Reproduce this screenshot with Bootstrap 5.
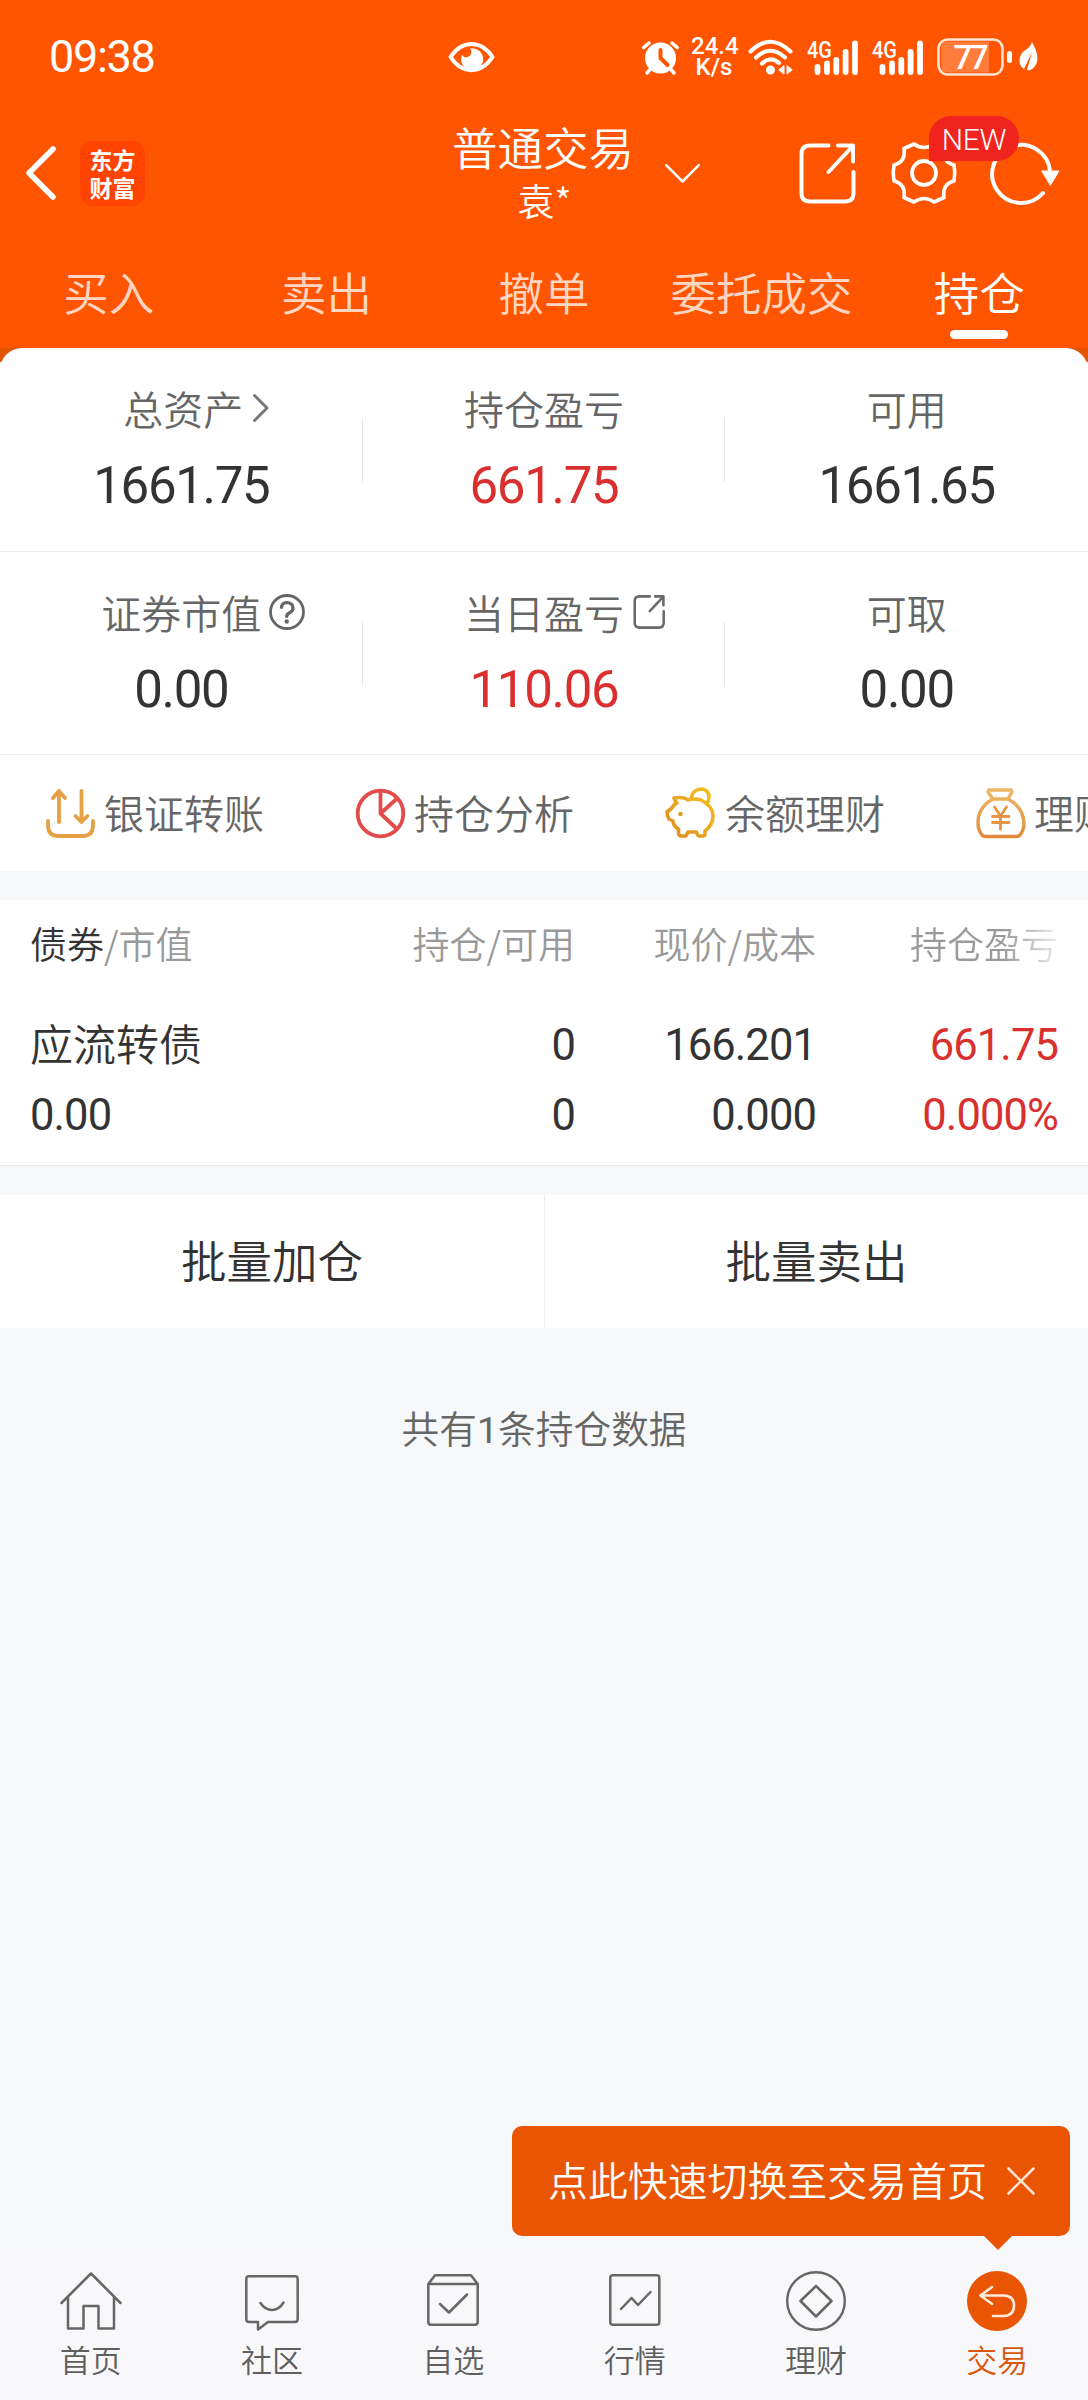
<!DOCTYPE html>
<html lang="zh-CN">
<head>
<meta charset="utf-8">
<meta name="viewport" content="width=device-width, initial-scale=1">
<title>持仓</title>
<link rel="stylesheet" href="https://cdn.jsdelivr.net/npm/bootstrap@5.3.0/dist/css/bootstrap.min.css">
<style>
:root{--brand:#ff5500;--deep:#ea5504;--ink:#333;--soft:#666;--pale:#999;--up:#d9302f;--canvas:#f7f8fa}
body{font-family:"Noto Sans CJK SC",sans-serif;background:var(--canvas);color:var(--ink);font-weight:350;overflow:hidden}
svg{display:block;flex:none;fill:none;stroke-linecap:round;stroke-linejoin:round;overflow:visible}
.screen{width:1088px;height:2400px}
.digits{font-family:Roboto,sans-serif;font-weight:400}
.topbar{background:var(--brand);color:#fff;height:348px}
.status{height:114px;padding:0 50px 0 49px}
.clock{font-size:45px;letter-spacing:-1.3px;line-height:114px;width:400px}
.rate{font-size:24px;line-height:21px;font-weight:500;width:46px;margin:0 11px 0 12px}
.titlebar{height:118px}
.applogo{width:65px;height:65px;border-radius:13px;background:#ff4300;font-weight:700;font-size:23px;line-height:28px;letter-spacing:0;margin-left:24px}
.title-main{font-size:45.5px;line-height:54px;margin-top:-1px}
.title-sub{font-size:37px;line-height:54px;padding-left:3px}
.title-col{width:182px;margin-left:307px;padding-top:0}
.newtag{left:929px;top:116px;width:90px;height:45px;border-radius:22px 22px 22px 0;background:#f0231f;font-size:30px;font-weight:300!important;line-height:47px;letter-spacing:-.3px}
.tabs-row{height:116px}
.tabs-row>div{font-size:45.5px;line-height:119px;color:#ffd6c2}
.tabs-row>.on{color:#fff}
.tabs-row>.on::after{content:"";position:absolute;left:80px;top:98px;width:58px;height:9px;border-radius:4.5px;background:#fff}
.sheet-back{background:linear-gradient(#e25400 14px,#fff 14px)}
.sheet{background:#fff;border-radius:22px 22px 0 0}
.stat-row{height:204px;border-bottom:1px solid #ededed}
.stat-row+.stat-row{height:203px}
.stat{padding-top:30px}
.stat+.stat::before{content:"";position:absolute;left:-1px;top:70px;width:1px;height:64px;background:#e8e8e8}
.cap-label{font-size:40px;line-height:60px;color:var(--soft)}
.cap-label svg{position:absolute;left:100%;top:50%}
.figure-num{font-size:51px;letter-spacing:-1.3px;line-height:60px;margin-top:18px}
.up{color:var(--up)}
.quick{height:116px;padding-left:46px}
.quick>div{width:310px;flex:none}
.quick span{font-size:40px;color:var(--soft);line-height:60px;white-space:nowrap;margin:-2px 0 0 9px}
.band{height:29px}
.grid-head{height:90px;font-size:37px;line-height:87px;color:var(--pale)}
.holding{height:176px;border-bottom:1px solid #e6e7e9;padding:0 30px}
.grid-head{padding:0 30px}
.c1{width:273px}.c2{width:272px}.c3{width:241px}.c4{width:242px}
.holding .r1{height:104px;line-height:111px;font-size:43.5px;letter-spacing:-.9px}
.holding .r1>.c1{font-size:43px;line-height:104px;letter-spacing:0}
.holding .r2{height:37px;line-height:43px;font-size:43.5px;letter-spacing:-.9px}
.fade-head{background:linear-gradient(90deg,#999 92px,#fff 162px);background-clip:text;-webkit-background-clip:text;color:transparent}
.batch{height:133px;font-size:45.5px;line-height:128px}
.batch>div+div{border-left:1px solid #f0f0f0}
.summary{font-size:37.7px;line-height:60px;color:var(--soft);margin-top:69px}
.hint{left:512px;top:2126px;width:558px;height:110px;border-radius:10px;background:var(--deep);color:#fff;font-size:39.9px;padding-left:36px}
.hint span{margin-top:-5px}
.hint::after{content:"";position:absolute;left:472px;top:110px;border:14px solid transparent;border-top-color:var(--deep);border-bottom:0}
.dock{height:150px;background:#f8f8fb;color:#5f5f5f}
.dock>div{font-size:31px;line-height:44px}
.dock .glyph{height:87px;padding-top:3px}
</style>
</head>
<body>
<div class="screen position-relative d-flex flex-column">
  <header class="topbar">
    <div class="status d-flex align-items-center">
      <div class="clock digits">09:38</div>
      <svg width="47" height="32" viewBox="0 0 47 32"><path d="M2.500 16C14-1.500 33-1.500 44.500 16C33 33.500 14 33.500 2.500 16Z" stroke="#fff" stroke-width="4"/><path d="M22 7.500A11 11 0 1 1 14 14a5 5 0 0 0 9-1Q24 9 22 7.500Z" fill="#fff"/></svg>
      <svg style="margin-left:147px" width="37" height="35" viewBox="0 0 37 35"><circle cx="18.500" cy="18" r="15.500" fill="#fff"/><path d="M1.800 7.500L7 3M35.200 7.500L30 3M5 33l3-3.500M32 33l-3-3.500" stroke="#fff" stroke-width="3.500"/><path d="M18.500 10v8l7 7" stroke="#ff5500" stroke-width="4"/></svg>
      <div class="rate digits text-center">24.4<br>K/s</div>
      <svg width="46" height="36" viewBox="0 0 46 36"><path d="M2.500 12.500Q22 -7 42.500 12.500M8 18.500Q22 5 37 18.500M14 24.500Q22 16.500 31 24" stroke="#fff" stroke-width="4"/><circle cx="22.500" cy="31" r="4.500" fill="#fff"/><path d="M36 27v8l-5-4zM39 27v8l5-4z" fill="#fff" stroke="#fff" stroke-width="1"/></svg>
      <svg style="margin-left:13px" width="51" height="35" viewBox="0 0 51 35"><text x="0" y="17.500" fill="#fff" font-family="Roboto" font-weight="500" font-size="24" textLength="25" lengthAdjust="spacingAndGlyphs">4G</text><path d="M10.500 27v5M20 23.500V32M29.300 20v12M38.600 12v20M48 3.500V32" stroke="#fff" stroke-width="5.800"/></svg>
      <svg style="margin-left:14px" width="51" height="35" viewBox="0 0 51 35"><text x="0" y="17.500" fill="#fff" font-family="Roboto" font-weight="500" font-size="24" textLength="25" lengthAdjust="spacingAndGlyphs">4G</text><path d="M10.500 27v5M20 23.500V32M29.300 20v12M38.600 12v20M48 3.500V32" stroke="#fff" stroke-width="5.800"/></svg>
      <svg style="margin-left:14px" width="76" height="38" viewBox="0 0 76 38"><path d="M10 3.500H52V34.500H10Q4 34.500 4 28V10Q4 3.500 10 3.500Z" fill="#ff7c3b"/><rect x="1.500" y="1.500" width="64" height="35" rx="9" stroke="#ffe3d3" stroke-width="2.600"/><rect x="70" y="13" width="5" height="12" rx="2.500" fill="#fff"/><text x="16.500" y="31" fill="#fff" font-family="Roboto" font-weight="500" font-size="33" textLength="35">77</text></svg>
      <svg style="margin-left:6px" width="19" height="30" viewBox="0 0 19 30"><path d="M13 0Q22 16 16 24Q13 29 8 28L13 10L5 27Q-1 23 .800 16Q2 10 8 7Q12 4 13 0Z" fill="#fff"/></svg>
    </div>
    <div class="titlebar d-flex align-items-center">
      <svg style="margin-left:26px" width="30" height="54" viewBox="0 0 30 54"><path d="M27 3L3 27L27 51" stroke="#fff" stroke-width="5.500"/></svg>
      <div class="applogo text-center d-flex flex-column justify-content-center"><div>东方</div><div>财富</div></div>
      <div class="title-col text-center"><div class="title-main text-nowrap">普通交易</div><div class="title-sub">袁*</div></div>
      <svg style="margin-left:31px" width="35" height="19" viewBox="0 0 35 19"><path d="M1.200 1.200L17.500 17.500L33.800 1.200" stroke="#fff" stroke-width="2.500"/></svg>
      <svg style="margin-left:99px" width="58" height="61" viewBox="0 0 58 61"><path d="M29.500 2.500H11Q2.500 2.500 2.500 11V50Q2.500 58.500 11 58.500H46Q54.500 58.500 54.500 50V29M39 2.500H54V18.500M53 4L29.500 29" stroke="#fff" stroke-width="4"/></svg>
      <svg style="margin-left:35px" width="64" height="62" viewBox="-32 -31 64 62"><path d="M-10-29Q0-22 10-29L20-24.500Q18-11 30-8Q31.500 0 30 8Q18 11 20 24.500L10 29Q0 22-10 29L-20 24.500Q-18 11-30 8Q-31.500 0-30-8Q-18-11-20-24.500Z" stroke="#fff" stroke-width="3.600"/><circle r="12" stroke="#fff" stroke-width="3.800"/></svg>
      <svg style="margin-left:36px" width="68" height="64" viewBox="-30 -32 68 64"><path d="M28-2A29 29 0 1 0 21 20" stroke="#fff" stroke-width="4"/><path d="M20-2H37L28.500 12Z" fill="#fff" stroke="#fff"/></svg>
    </div>
    <div class="tabs-row d-flex text-center">
      <div class="flex-fill w-100">买入</div><div class="flex-fill w-100">卖出</div><div class="flex-fill w-100">撤单</div><div class="flex-fill w-100">委托成交</div><div class="flex-fill w-100 on position-relative">持仓</div>
    </div>
    <div class="newtag digits position-absolute text-center">NEW</div>
  </header>

  <section class="sheet-back"><div class="sheet">
    <div class="stat-row row g-0 text-center">
      <div class="col-4 stat position-relative"><div class="cap-label position-relative d-inline-block ms-1">总资产<svg style="margin:-14px 0 0 10px" width="16" height="28" viewBox="0 0 16 28"><path d="M1.500 1.500L14 14L1.500 26.500" stroke="#777" stroke-width="3"/></svg></div><div class="figure-num digits">1661.75</div></div>
      <div class="col-4 stat position-relative"><div class="cap-label">持仓盈亏</div><div class="figure-num digits up">661.75</div></div>
      <div class="col-4 stat position-relative"><div class="cap-label">可用</div><div class="figure-num digits">1661.65</div></div>
    </div>
    <div class="stat-row row g-0 text-center">
      <div class="col-4 stat position-relative"><div class="cap-label position-relative d-inline-block">证券市值<svg style="margin:-18px 0 0 8px" width="36" height="36" viewBox="0 0 36 36"><circle cx="18" cy="18" r="16.500" stroke="#666" stroke-width="2.800"/><path d="M12.500 13.500Q13 8.500 18 8.500Q24 9 24 14Q24 17 21 18.500Q17.700 20 17.700 22.500" stroke="#666" stroke-width="3.200"/><circle cx="17.700" cy="27.500" r="2.200" fill="#666"/></svg></div><div class="figure-num digits">0.00</div></div>
      <div class="col-4 stat position-relative"><div class="cap-label position-relative d-inline-block">当日盈亏<svg style="margin:-17px 0 0 9px" width="33" height="34" viewBox="0 0 58 61"><path d="M29.500 2.500H11Q2.500 2.500 2.500 11V50Q2.500 58.500 11 58.500H46Q54.500 58.500 54.500 50V29M39 2.500H54V18.500M53 4L29.500 29" stroke="#6a6a6a" stroke-width="4.600"/></svg></div><div class="figure-num digits up">110.06</div></div>
      <div class="col-4 stat position-relative"><div class="cap-label">可取</div><div class="figure-num digits">0.00</div></div>
    </div>
    <div class="quick d-flex align-items-center overflow-hidden">
      <div class="d-flex align-items-center"><svg width="49" height="50" viewBox="0 0 49 50"><path d="M2 33V37Q2 48 12 48H37Q47 48 47 37V33M13 34V3M7 10L13 3L19 10M35.500 3V34M29.500 28L35.500 34L41.500 28" stroke="#e6a044" stroke-width="3.800"/></svg><span>银证转账</span></div>
      <div class="d-flex align-items-center"><svg width="49" height="49" viewBox="0 0 49 49"><circle cx="24.500" cy="24.500" r="22.800" stroke="#e34c4c" stroke-width="3.800"/><path d="M24.500 2V24.500L41 9.500M24.500 24.500L41 40" stroke="#e34c4c" stroke-width="3.800"/></svg><span>持仓分析</span></div>
      <div class="d-flex align-items-center"><svg width="49" height="50" viewBox="0 0 49 50"><defs><linearGradient id="gp" x1="0" y1="1" x2="1" y2="0"><stop stop-color="#dd8b22"/><stop offset="1" stop-color="#f6c21c"/></linearGradient></defs><path d="M8 10Q18 8.500 22 12Q27 10 35 12Q47 18 47 28Q47 37 39 43V46Q39 48 37 48H33Q31 47 30.500 44H22L20 48H15Q13 48 12.500 45V41Q7 38 7 33L3 31Q1 28 1 24L6 20Q8 16 11 15Q9 13 8 10ZM25 11C26-1 42-2 43 8Q43 13 41 16" stroke="url(#gp)" stroke-width="3.600"/><circle cx="14.500" cy="26" r="2.300" fill="#e39a24"/></svg><span style="margin-left:10px">余额理财</span></div>
      <div class="d-flex align-items-center"><svg width="49" height="50" viewBox="0 0 49 50"><defs><linearGradient id="gb" x1="0" y1="1" x2="0" y2="0"><stop stop-color="#e28a3c"/><stop offset="1" stop-color="#edb765"/></linearGradient></defs><path d="M13 2H35Q37 3 35 5.500L32 11H17L13 5.500Q11 3 13 2ZM17 11Q2 19 2 35Q2 42 6 47Q7 48.500 10 48.500H40Q43 48.500 44 47Q48 42 48 35Q47 19 32 11" stroke="url(#gb)" stroke-width="3.400"/><path d="M18.500 19L24.500 28L30.500 19M24.500 28V41M16.500 28.500H33M16.500 34.500H33" stroke="#e69445" stroke-width="2.800"/></svg><span>理财产品</span></div>
    </div>
  </div></section>
  <div class="band"></div>
  <section class="bg-white">
    <div class="grid-head d-flex text-end text-nowrap"><div class="c1 text-start"><span style="color:#333">债券</span>/市值</div><div class="c2">持仓/可用</div><div class="c3">现价/成本</div><div class="c4"><span class="fade-head">持仓盈亏</span></div></div>
    <div class="holding">
      <div class="r1 d-flex text-end"><div class="c1 text-start">应流转债</div><div class="c2 digits">0</div><div class="c3 digits">166.201</div><div class="c4 digits up">661.75</div></div>
      <div class="r2 d-flex text-end"><div class="c1 digits text-start">0.00</div><div class="c2 digits">0</div><div class="c3 digits">0.000</div><div class="c4 digits up">0.000%</div></div>
    </div>
  </section>
  <div class="band"></div>
  <section class="batch row g-0 text-center bg-white"><div class="col-6">批量加仓</div><div class="col-6">批量卖出</div></section>
  <div class="summary text-center">共有<span class="digits">1</span>条持仓数据</div>

  <nav class="dock d-flex text-center mt-auto">
    <div class="w-100"><div class="glyph d-flex justify-content-center"><svg style="margin-top:19px" width="62" height="58" viewBox="0 0 62 58"><path d="M1.500 31L31 1.500L60.500 31M8 25V56.500H23.500V34H38.500V56.500H54V25" stroke="#666" stroke-width="2.500"/></svg></div>首页</div>
    <div class="w-100"><div class="glyph d-flex justify-content-center"><svg style="margin-top:22px" width="54" height="56" viewBox="0 0 54 56"><path d="M4 1.300H50Q52.700 1.300 52.700 4V44Q52.700 47 50 47H23L13 54.500V47H4Q1.300 47 1.300 44V4Q1.300 1.300 4 1.300ZM15.500 28Q20 35 27 35Q34 35 38.500 27.500" stroke="#666" stroke-width="2.500"/></svg></div>社区</div>
    <div class="w-100"><div class="glyph d-flex justify-content-center"><svg style="margin-top:21px" width="52" height="52" viewBox="0 0 52 52"><path d="M1.300 10L8 1.300H44L50.700 10M1.300 10H50.700V48Q50.700 50.700 48 50.700H4Q1.300 50.700 1.300 48ZM13 30L22 38.500L40 20.500" stroke="#666" stroke-width="2.500"/></svg></div>自选</div>
    <div class="w-100"><div class="glyph d-flex justify-content-center"><svg style="margin-top:21px" width="52" height="52" viewBox="0 0 52 52"><rect x="1.300" y="1.300" width="49" height="49.500" rx="2.500" stroke="#666" stroke-width="2.500"/><path d="M12 35L22.500 24L29 31L41.500 18" stroke="#666" stroke-width="2.500"/></svg></div>行情</div>
    <div class="w-100"><div class="glyph d-flex justify-content-center"><svg style="margin-top:18px" width="60" height="60" viewBox="0 0 60 60"><circle cx="30" cy="30" r="28.800" stroke="#666" stroke-width="2.400"/><path d="M30 15L45.500 30L30 45.500L14.500 30Z" stroke="#666" stroke-width="2.500"/></svg></div>理财</div>
    <div class="w-100" style="color:#d9570f"><div class="glyph d-flex justify-content-center"><svg style="margin-top:18px" width="60" height="60" viewBox="0 0 60 60"><circle cx="30" cy="30" r="30" fill="#ea5504"/><path d="M25 16L13.500 24.500L25 33M13.500 24.500H37Q47 25 47 34.500Q47 44.500 37 45H26" stroke="#ffeadb" stroke-width="2.600"/></svg></div>交易</div>
  </nav>
  <div class="hint position-absolute d-flex align-items-center text-nowrap"><span>点此快速切换至交易首页</span><svg style="margin-left:20px" width="28" height="28" viewBox="0 0 28 28"><path d="M1.500 1.500L26.500 26.500M26.500 1.500L1.500 26.500" stroke="#ffe3d0" stroke-width="2.600"/></svg></div>
</div>
<script src="https://cdn.jsdelivr.net/npm/bootstrap@5.3.0/dist/js/bootstrap.bundle.min.js"></script>
</body>
</html>
